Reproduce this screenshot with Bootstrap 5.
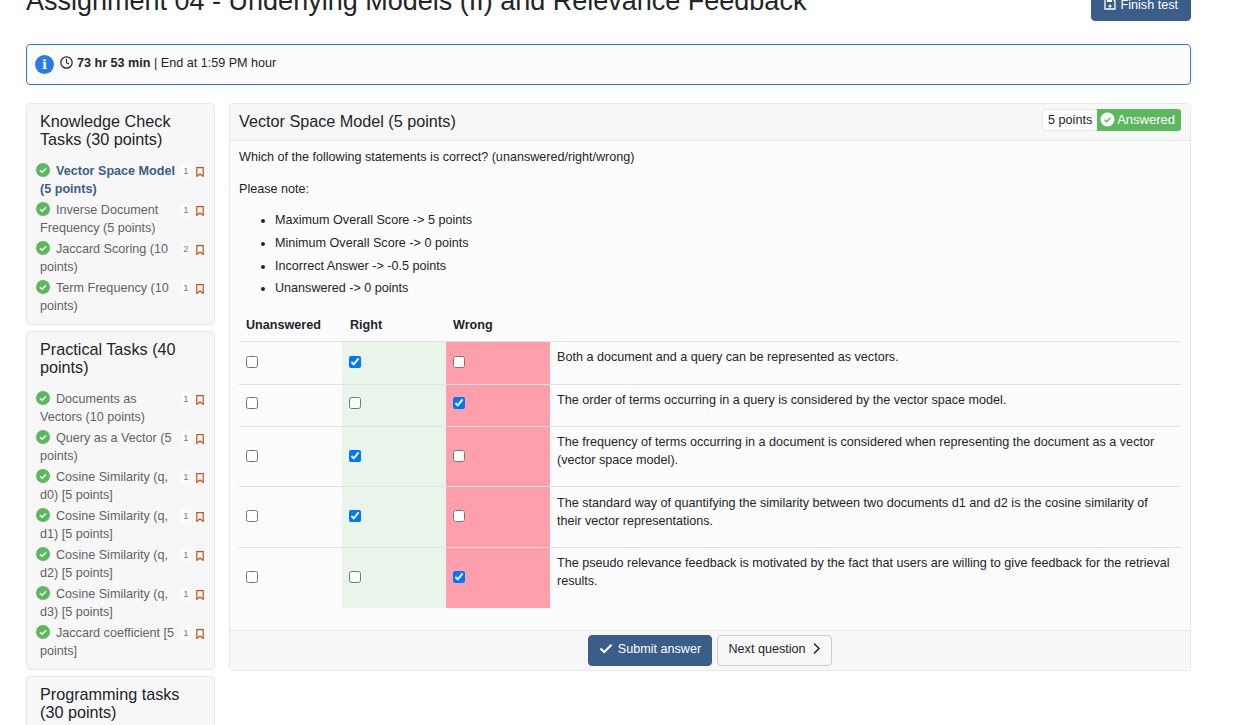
<!DOCTYPE html>
<html lang="en">
<head>
    <meta charset="UTF-8">
    <meta name="viewport" content="width=device-width, initial-scale=1.0">
    <title>Assignment 04</title>
    <link href="https://cdn.jsdelivr.net/npm/bootstrap@5.3.0/dist/css/bootstrap.min.css" rel="stylesheet">
    <style>
        html, body { height: 725px; overflow: hidden; }
        body { font-family: "Liberation Sans", Arial, sans-serif; font-size: 12.6px; line-height: 18px; color: #212529; background: #fff; }
        .page-wrap { width: 1165px; margin-left: 26px; margin-top: -16px; }
        .test-title { font-size: 27px; line-height: 34px; font-weight: 400; margin: 0; }
        .finish-btn { width: 100px; height: 37px; background: #3b5d89; border-color: #3b5d89; color: #fff; font-size: 12.6px; line-height: 18px; padding: 4px 0 0; border-radius: 4px; }
        .finish-btn svg { vertical-align: -1px; margin-right: 1px; }
        .time-alert { height: 41px; margin-top: 23px; padding: 0 8px; border: 1px solid #2c7be5; border-radius: 4px; background: #fcfcfc; margin-bottom: 18px; }
        .info-dot { width: 19px; height: 19px; border-radius: 50%; background: #2c7be5; color: #fff; font: bold 13px/19px "DejaVu Serif", serif; text-align: center; margin-right: 6px; }
        .time-info { margin-bottom: 3px; }
        .time-info svg { vertical-align: -2px; margin-right: 4px; }
        .side-col { width: 189px; flex: none; }
        .side-box { background: #f7f7f7; border: 1px solid #e8e8e8; border-radius: 4px; padding: 8px 9px 6px 9px; margin-bottom: 6px; }
        .side-title { font-size: 16.2px; line-height: 18px; font-weight: 400; margin: 0 0 14px 4px; }
        .task-row { display: flex; margin-bottom: 3px; color: #5f6368; }
        .task-row.active-task { color: #3b5d89; font-weight: 700; }
        .task-text { width: 142px; flex: none; padding-left: 4px; }
        .task-text svg { margin-left: -4px; margin-right: 6px; vertical-align: -2px; }
        .task-meta { display: flex; align-items: flex-start; padding-top: 2px; }
        .task-num { width: 10px; margin-left: 3px; font-size: 9.5px; line-height: 14px; font-weight: 400; text-align: center; color: #8a7a5a; background: #fcfcfc; }
        .task-meta svg { margin: 3px 0 0 5px; }
        .main-box { width: 962px; height: 568px; margin-left: 14px; border: 1px solid #e8e8e8; border-radius: 4px; background: #fcfcfc; }
        .main-head { height: 37px; background: #f7f7f7; border-bottom: 1px solid #e8e8e8; padding: 4px 9px 0; }
        .main-head h5 { font-size: 16.2px; line-height: 26px; font-weight: 400; margin: 0; }
        .tag-group { margin-top: 1px; }
        .pts-tag { height: 22px; line-height: 20px; padding: 0 5px; background: #fff; border: 1px solid #e8e8e8; border-right: 0; border-radius: 3px 0 0 3px; }
        .answered-tag { height: 22px; line-height: 22px; padding: 0 6px 0 3px; background: #5cb85c; color: #fff; border-radius: 0 3px 3px 0; font-size: 13px; }
        .answered-tag svg { vertical-align: -3px; margin-right: 2px; }
        .main-body { height: 489px; padding: 7px 9px 0; }
        .main-body p { margin: 0 0 14px; }
        .main-body p + ul { margin-top: -1px; }
        .note-list { margin: 0 0 11.4px; padding-left: 36px; }
        .note-list li { line-height: 18px; margin-bottom: 4.8px; }
        .answer-tbl { width: 942px; margin: 0; table-layout: fixed; --bs-table-bg: transparent; font-size: 12.6px; }
        .answer-tbl th { height: 33px; padding: 0 7px; line-height: 18px; vertical-align: middle; border-bottom: 1px solid #dee2e6; font-weight: 700; }
        .answer-tbl th:nth-child(2) { padding-left: 8px; }
        .answer-tbl td { padding: 6px 7px 8px; vertical-align: middle; border-bottom: 1px solid #dee2e6; line-height: 18px; background: transparent; box-shadow: none; }
        .answer-tbl tr:last-child td { border-bottom: 0; }
        .answer-tbl .row-b td { padding-bottom: 11px; }
        .answer-tbl td.q-text { vertical-align: top; padding: 6px 7px 0; }
        .answer-tbl .row-d td.q-text { padding-top: 7px; }
        .answer-tbl input { display: block; width: 12px; height: 12px; margin: 0; }
        .answer-tbl td.cell-right { background: #e9f5ea; }
        .answer-tbl td.cell-wrong { background: #ff9fab; }
        .row-a { height: 43px; }
        .row-b { height: 42px; }
        .row-c { height: 60px; }
        .row-d { height: 61px; }
        .main-foot { height: 40px; background: #f7f7f7; border-top: 1px solid #e8e8e8; gap: 5px; padding-top: 4px; }
        .submit-btn { width: 124px; height: 31px; padding: 0 0 4px; font-size: 12.6px; line-height: 18px; background: #3b5d89; border-color: #3b5d89; color: #fff; border-radius: 4px; }
        .next-btn { width: 115px; height: 31px; padding: 0 0 4px; font-size: 12.6px; line-height: 18px; background: #f7f7f7; border-color: #ccc; color: #212529; border-radius: 4px; }
        .submit-btn svg { vertical-align: -1px; margin-right: 5px; }
        .next-btn svg { vertical-align: -2px; margin-left: 6px; }
    </style>
</head>
<body>
    <svg width="0" height="0" class="d-none">
        <symbol id="ok-dot" viewBox="0 0 14 14"><circle cx="7" cy="7" r="7" fill="#5cb85c"/><path d="M4 7.2l2.2 2.1L10 5.2" fill="none" stroke="#fff" stroke-width="1.5"/></symbol>
        <symbol id="mark-icon" viewBox="0 0 8 10"><path d="M.8.7h6.4v8.6L4 6.9.8 9.3z" fill="none" stroke="#c9501f" stroke-width="1.2"/></symbol>
    </svg>
    <div class="page-wrap">
        <div class="d-flex justify-content-between align-items-start">
            <h1 class="test-title">Assignment 04 - Underlying Models (II) and Relevance Feedback</h1>
            <button class="btn finish-btn">
                <svg width="12" height="12" viewBox="0 0 12 12"><path d="M1 1h8l2 2v8H1z" fill="none" stroke="#fff" stroke-width="1.3"/><rect x="3" y="1" width="5" height="3" fill="#fff"/><circle cx="6" cy="8" r="1.5" fill="#fff"/></svg>
                Finish test
            </button>
        </div>

        <div class="time-alert d-flex align-items-center">
            <span class="info-dot">i</span>
            <div class="time-info">
                <svg width="13" height="13" viewBox="0 0 13 13"><circle cx="6.5" cy="6.5" r="5.7" fill="none" stroke="#212529" stroke-width="1.2"/><path d="M6.5 3v3.7l2.5 1.4" fill="none" stroke="#212529" stroke-width="1.1"/></svg><b>73 hr 53 min</b> | End at 1:59 PM hour
            </div>
        </div>

        <div class="d-flex align-items-start">
            <div class="side-col">
                <div class="side-box">
                    <h5 class="side-title">Knowledge Check Tasks (30 points)</h5>
                    <div class="task-row active-task">
                        <div class="task-text"><svg width="14" height="14"><use href="#ok-dot"/></svg>Vector Space Model (5 points)</div>
                        <div class="task-meta"><span class="task-num">1</span><svg width="8" height="10"><use href="#mark-icon"/></svg></div>
                    </div>
                    <div class="task-row">
                        <div class="task-text"><svg width="14" height="14"><use href="#ok-dot"/></svg>Inverse Document Frequency (5 points)</div>
                        <div class="task-meta"><span class="task-num">1</span><svg width="8" height="10"><use href="#mark-icon"/></svg></div>
                    </div>
                    <div class="task-row">
                        <div class="task-text"><svg width="14" height="14"><use href="#ok-dot"/></svg>Jaccard Scoring (10 points)</div>
                        <div class="task-meta"><span class="task-num">2</span><svg width="8" height="10"><use href="#mark-icon"/></svg></div>
                    </div>
                    <div class="task-row">
                        <div class="task-text"><svg width="14" height="14"><use href="#ok-dot"/></svg>Term Frequency (10 points)</div>
                        <div class="task-meta"><span class="task-num">1</span><svg width="8" height="10"><use href="#mark-icon"/></svg></div>
                    </div>
                </div>
                <div class="side-box">
                    <h5 class="side-title">Practical Tasks (40 points)</h5>
                    <div class="task-row">
                        <div class="task-text"><svg width="14" height="14"><use href="#ok-dot"/></svg>Documents as Vectors (10 points)</div>
                        <div class="task-meta"><span class="task-num">1</span><svg width="8" height="10"><use href="#mark-icon"/></svg></div>
                    </div>
                    <div class="task-row">
                        <div class="task-text"><svg width="14" height="14"><use href="#ok-dot"/></svg>Query as a Vector (5 points)</div>
                        <div class="task-meta"><span class="task-num">1</span><svg width="8" height="10"><use href="#mark-icon"/></svg></div>
                    </div>
                    <div class="task-row">
                        <div class="task-text"><svg width="14" height="14"><use href="#ok-dot"/></svg>Cosine Similarity (q, d0) [5 points]</div>
                        <div class="task-meta"><span class="task-num">1</span><svg width="8" height="10"><use href="#mark-icon"/></svg></div>
                    </div>
                    <div class="task-row">
                        <div class="task-text"><svg width="14" height="14"><use href="#ok-dot"/></svg>Cosine Similarity (q, d1) [5 points]</div>
                        <div class="task-meta"><span class="task-num">1</span><svg width="8" height="10"><use href="#mark-icon"/></svg></div>
                    </div>
                    <div class="task-row">
                        <div class="task-text"><svg width="14" height="14"><use href="#ok-dot"/></svg>Cosine Similarity (q, d2) [5 points]</div>
                        <div class="task-meta"><span class="task-num">1</span><svg width="8" height="10"><use href="#mark-icon"/></svg></div>
                    </div>
                    <div class="task-row">
                        <div class="task-text"><svg width="14" height="14"><use href="#ok-dot"/></svg>Cosine Similarity (q, d3) [5 points]</div>
                        <div class="task-meta"><span class="task-num">1</span><svg width="8" height="10"><use href="#mark-icon"/></svg></div>
                    </div>
                    <div class="task-row">
                        <div class="task-text"><svg width="14" height="14"><use href="#ok-dot"/></svg>Jaccard coefficient [5 points]</div>
                        <div class="task-meta"><span class="task-num">1</span><svg width="8" height="10"><use href="#mark-icon"/></svg></div>
                    </div>
                </div>
                <div class="side-box">
                    <h5 class="side-title">Programming tasks (30 points)</h5>
                </div>
            </div>

            <div class="main-box">
                <div class="main-head d-flex justify-content-between align-items-start">
                    <h5>Vector Space Model (5 points)</h5>
                    <div class="d-flex tag-group">
                        <span class="pts-tag">5 points</span>
                        <span class="answered-tag"><svg width="15" height="15" viewBox="0 0 15 15"><circle cx="7.5" cy="7.5" r="7" fill="#fff"/><path d="M4.5 7.7l2.2 2.1 3.8-4" fill="none" stroke="#5cb85c" stroke-width="1.4"/></svg>Answered</span>
                    </div>
                </div>
                <div class="main-body">
                    <p>Which of the following statements is correct? (unanswered/right/wrong)</p>
                    <p>Please note:</p>
                    <ul class="note-list">
                        <li>Maximum Overall Score -&gt; 5 points</li>
                        <li>Minimum Overall Score -&gt; 0 points</li>
                        <li>Incorrect Answer -&gt; -0.5 points</li>
                        <li>Unanswered -&gt; 0 points</li>
                    </ul>
                    <table class="table answer-tbl">
                        <colgroup><col style="width:103px"><col style="width:104px"><col style="width:104px"><col></colgroup>
                        <thead>
                            <tr><th>Unanswered</th><th>Right</th><th>Wrong</th><th></th></tr>
                        </thead>
                        <tbody>
                            <tr class="row-a">
                                <td><input type="checkbox"></td>
                                <td class="cell-right"><input type="checkbox" checked></td>
                                <td class="cell-wrong"><input type="checkbox"></td>
                                <td class="q-text">Both a document and a query can be represented as vectors.</td>
                            </tr>
                            <tr class="row-b">
                                <td><input type="checkbox"></td>
                                <td class="cell-right"><input type="checkbox"></td>
                                <td class="cell-wrong"><input type="checkbox" checked></td>
                                <td class="q-text">The order of terms occurring in a query is considered by the vector space model.</td>
                            </tr>
                            <tr class="row-c">
                                <td><input type="checkbox"></td>
                                <td class="cell-right"><input type="checkbox" checked></td>
                                <td class="cell-wrong"><input type="checkbox"></td>
                                <td class="q-text">The frequency of terms occurring in a document is considered when representing the document as a vector (vector space model).</td>
                            </tr>
                            <tr class="row-d">
                                <td><input type="checkbox"></td>
                                <td class="cell-right"><input type="checkbox" checked></td>
                                <td class="cell-wrong"><input type="checkbox"></td>
                                <td class="q-text">The standard way of quantifying the similarity between two documents d1 and d2 is the cosine similarity of their vector representations.</td>
                            </tr>
                            <tr class="row-c">
                                <td><input type="checkbox"></td>
                                <td class="cell-right"><input type="checkbox"></td>
                                <td class="cell-wrong"><input type="checkbox" checked></td>
                                <td class="q-text">The pseudo relevance feedback is motivated by the fact that users are willing to give feedback for the retrieval results.</td>
                            </tr>
                        </tbody>
                    </table>
                </div>
                <div class="main-foot d-flex justify-content-center">
                    <button class="btn submit-btn"><svg width="14" height="11" viewBox="0 0 14 11"><path d="M1.5 5.5l3.8 3.5 7.2-7.2" fill="none" stroke="#fff" stroke-width="2"/></svg>Submit answer</button>
                    <button class="btn next-btn">Next question<svg width="9" height="13" viewBox="0 0 9 13"><path d="M2 1.5l5 5-5 5" fill="none" stroke="#212529" stroke-width="1.5"/></svg></button>
                </div>
            </div>
        </div>
    </div>
    <script src="https://cdn.jsdelivr.net/npm/bootstrap@5.3.0/dist/js/bootstrap.bundle.min.js"></script>
</body>
</html>
